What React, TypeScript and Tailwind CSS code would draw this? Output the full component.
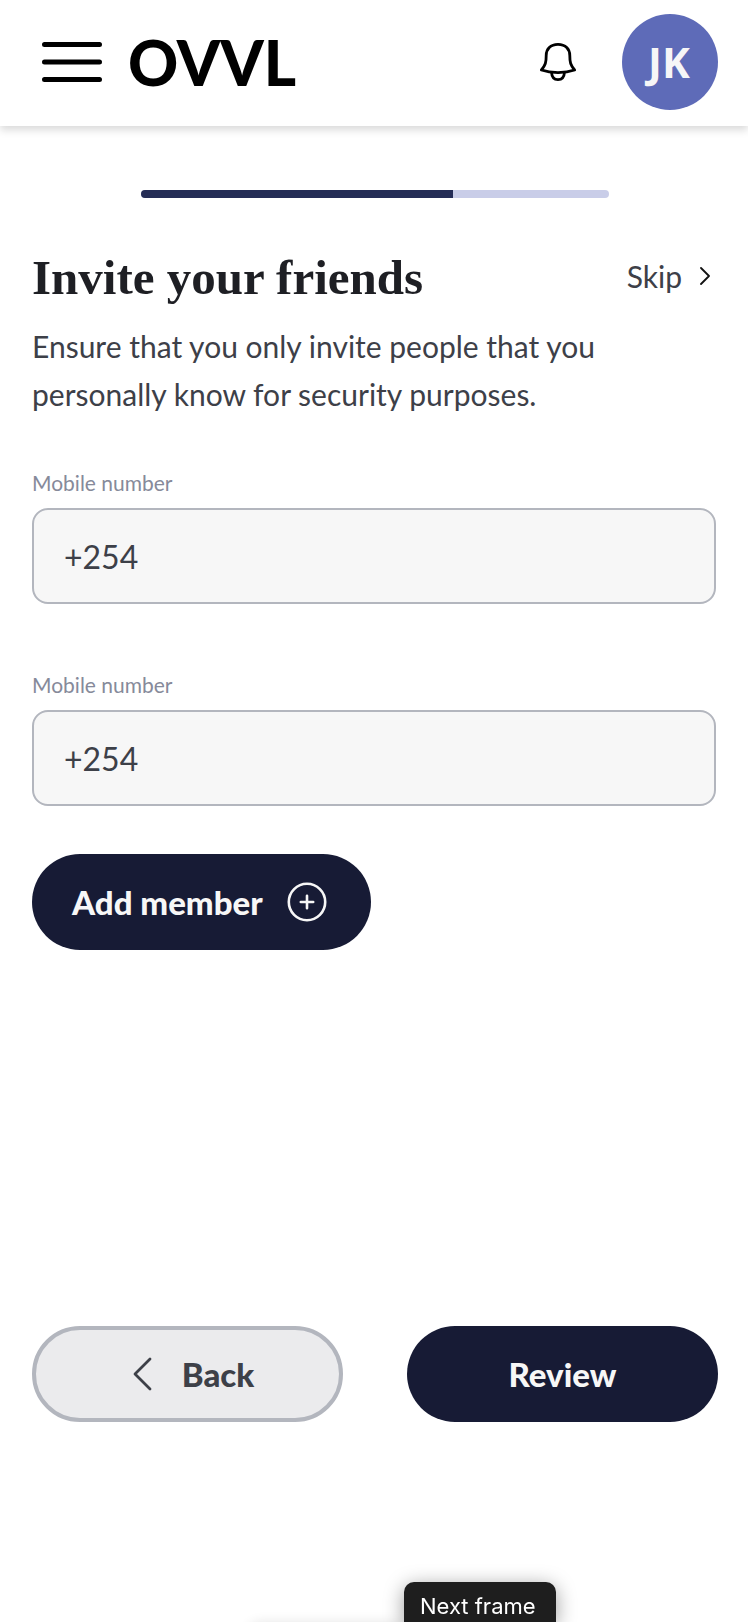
import React, { useState } from 'react';

const INITIAL_MEMBERS = [
  { id: 1, phone: '+254' },
  { id: 2, phone: '+254' },
];

const STEP = 2;
const TOTAL_STEPS = 3;

function MenuIcon() {
  return (
    <svg width="60" height="40" viewBox="0 0 60 40" fill="none" stroke="currentColor" strokeWidth="5" strokeLinecap="round" aria-hidden="true">
      <path d="M2.5 2.5h55M2.5 20h55M2.5 37.5h55" />
    </svg>
  );
}

function BellIcon() {
  return (
    <svg width="36" height="38" viewBox="0 0 36 38" fill="none" stroke="currentColor" strokeWidth="2.8" strokeLinecap="round" strokeLinejoin="round" aria-hidden="true">
      <path d="M18 1.4C10.5 1.4 6.2 6 6.2 12.5C6.2 19.5 5.5 22 1.4 27C11 30.4 25 30.4 34.6 27C30.5 22 29.8 19.5 29.8 12.5C29.8 6 25.5 1.4 18 1.4Z" />
      <path d="M11.6 29.8C11.8 34 14.2 36.6 18 36.6C21.8 36.6 24.2 34 24.4 29.8" />
    </svg>
  );
}

function Header() {
  return (
    <header className="flex h-[126px] items-center justify-between bg-white pr-[30px] pb-[2px] pl-[42px] shadow-[0_4px_8px_rgba(0,0,0,0.15)]">
      <div className="flex items-center gap-[26px]">
        <button type="button" aria-label="Open menu" className="cursor-pointer text-black">
          <MenuIcon />
        </button>
        <a href="#" className="font-[Lato,sans-serif] text-[62px] leading-[58px] font-black text-black">OVVL</a>
      </div>
      <div className="flex items-center gap-[46px]">
        <button type="button" aria-label="Notifications" className="cursor-pointer text-black">
          <BellIcon />
        </button>
        <button type="button" aria-label="Account" className="size-24 cursor-pointer rounded-full bg-[#5e6bb8] pr-[2px] font-['Open_Sans',sans-serif] text-[42px] font-bold text-[#f6f6f7]">
          JK
        </button>
      </div>
    </header>
  );
}

export default function App() {
  const [members, setMembers] = useState(INITIAL_MEMBERS);

  const addMember = () => {
    setMembers([...members, { id: members.length + 1, phone: '+254' }]);
  };

  const updatePhone = (id: number, phone: string) => {
    setMembers(members.map((m) => (m.id === id ? { ...m, phone } : m)));
  };

  return (
    <div className="flex min-h-screen flex-col bg-white font-[Lato,sans-serif] text-[30px] leading-[48px] text-[#3d4048]">
      <Header />

      <main className="flex flex-1 flex-col pt-16 pr-[30px] pb-[200px] pl-8">
        {/* Onboarding progress */}
        <div
          role="progressbar"
          aria-label="Onboarding progress"
          aria-valuenow={STEP}
          aria-valuemax={TOTAL_STEPS}
          className="mx-auto h-2 w-[468px] max-w-full overflow-hidden rounded-full bg-[#c9cde8]"
        >
          <div className="h-full bg-[#252d56]" style={{ width: `${(STEP / TOTAL_STEPS) * 100}%` }} />
        </div>

        <div className="mt-12 flex items-start justify-between">
          <h1 className="font-['Liberation_Serif',serif] text-[49px] leading-[64px] font-bold text-[#1e1f24]">Invite your friends</h1>
          <a href="#" className="flex items-center gap-[18px] pr-2 leading-[60px]">
            Skip
            <svg width="10" height="18" viewBox="0 0 10 18" fill="none" stroke="#111" strokeWidth="1.8" strokeLinecap="round" strokeLinejoin="round" aria-hidden="true">
              <path d="M1 1l8 8-8 8" />
            </svg>
          </a>
        </div>
        <p className="mt-3 max-w-[600px]">
          Ensure that you only invite people that you personally know for security purposes.
        </p>

        <form id="invite" className="mt-12 pr-[2px]" onSubmit={(e) => e.preventDefault()}>
          <div className="space-y-16">
            {members.map((member) => (
              <div key={member.id}>
                <label htmlFor={`phone-${member.id}`} className="block pb-2 text-[21px] leading-[34px] text-[#868a9a]">Mobile number</label>
                <input
                  id={`phone-${member.id}`}
                  type="tel"
                  value={member.phone}
                  onChange={(e) => updatePhone(member.id, e.target.value)}
                  className="block h-24 w-full rounded-2xl border-2 border-[#b3b6be] bg-[#f7f7f7] px-[30px] text-[32px]"
                />
              </div>
            ))}
          </div>
          <button type="button" onClick={addMember} className="mt-12 flex h-24 cursor-pointer items-center gap-6 rounded-full bg-[#171b35] pr-11 pl-10 text-[33px] font-black text-[#f7f7f7]">
            Add member
            <svg width="40" height="40" viewBox="0 0 40 40" fill="none" stroke="currentColor" strokeWidth="2.6" strokeLinecap="round" aria-hidden="true">
              <circle cx="20" cy="20" r="18.2" />
              <path d="M20 13.8v12.4M13.8 20h12.4" />
            </svg>
          </button>
        </form>

        <div className="mt-auto grid grid-cols-2 gap-16 text-[33px] font-black">
          <button type="button" className="flex h-24 cursor-pointer items-center justify-center gap-[30px] rounded-full border-4 border-[#b3b6be] bg-[#ebebed] pl-3">
            <svg width="19" height="34" viewBox="0 0 19 34" fill="none" stroke="currentColor" strokeWidth="2.8" strokeLinecap="round" strokeLinejoin="round" aria-hidden="true">
              <path d="M17 2L2 17l15 15" />
            </svg>
            Back
          </button>
          <button type="submit" form="invite" className="h-24 cursor-pointer rounded-full bg-[#171b35] text-[#f7f7f7]">
            Review
          </button>
        </div>
      </main>

      {/* Prototype player bar sits just under the fold, only its shadow and hint show */}
      <div className="fixed top-full left-[248px] h-16 w-[240px] rounded-xl bg-[#1e1e1e] shadow-[0_0_12px_rgba(0,0,0,0.1)]" />
      <div role="tooltip" className="fixed bottom-0 left-[404px] h-10 rounded-t-[10px] bg-[#1e1e1e] pt-2 pr-5 pl-4 font-[Inter,sans-serif] text-[22px] leading-8 text-white shadow-[0_4px_20px_rgba(0,0,0,0.4)]">
        Next frame
      </div>
    </div>
  );
}
